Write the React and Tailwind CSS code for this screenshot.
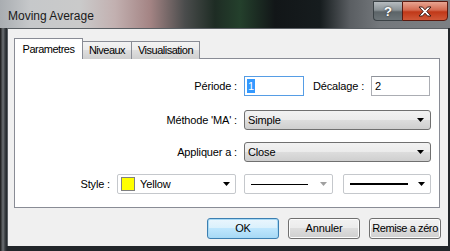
import React from "react";

const font = { fontFamily: '"Liberation Sans", Arial, sans-serif' };

function Arrow({ gray }) {
  return (
    <svg width="7" height="4" viewBox="0 0 7 4" className="shrink-0">
      <path d="M0 0H7L3.5 4Z" fill={gray ? "#a0a0a0" : "#000"} />
    </svg>
  );
}

function DropList({ text }) {
  return (
    <div className="h-[20px] w-[187px] rounded-[3px] border border-[#707070] bg-[linear-gradient(180deg,#f2f2f2_0%,#ebebeb_50%,#dddddd_50%,#cfcfcf_100%)] flex items-center pl-[3px] pr-[6px]">
      <span className="flex-1 text-[11px] text-black leading-none">{text}</span>
      <Arrow />
    </div>
  );
}

function Combo({ w, children, gray }) {
  return (
    <div
      className="h-[20px] rounded-[2px] border border-[#c5c8cc] bg-white flex items-center pr-[5px]"
      style={{ width: w }}
    >
      <div className="flex-1 flex items-center h-full">{children}</div>
      <Arrow gray={gray} />
    </div>
  );
}

function Btn({ children, focus }) {
  return (
    <div
      className={
        "w-[72px] h-[21px] rounded-[3px] flex items-center justify-center text-[11px] text-black leading-none whitespace-nowrap " +
        (focus
          ? "border border-[#3c7fb1] bg-[linear-gradient(180deg,#eaf6fd_0%,#d9f0fc_50%,#bee6fd_50%,#a7d9f5_100%)] shadow-[inset_0_0_0_1px_#a7d9f5]"
          : "border border-[#707070] bg-[linear-gradient(180deg,#f2f2f2_0%,#ebebeb_50%,#dddddd_50%,#cfcfcf_100%)] shadow-[inset_0_0_0_1px_#fcfcfc]")
      }
    >
      {children}
    </div>
  );
}

export default function App() {
  return (
    <div className="w-[450px] h-[251px] overflow-hidden flex flex-col bg-[#111619] tracking-[-0.15px]" style={font}>
      {/* title bar */}
      <div className="h-[28px] shrink-0 flex items-start bg-[linear-gradient(90deg,#a9adb1_0px,#c6c8ca_30px,#cacaca_80px,#c2b0b0_115px,#a48484_150px,#4a4c4c_185px,#1e2c24_215px,#24402c_240px,#121618_275px,#161c1e_320px,#5a5e62_350px,#74787c_380px,#7c8084_450px)]">
        <div className="pl-[8px] pt-[10px] text-[12px] leading-[12px] text-[#1a1a1a] tracking-normal">Moving Average</div>
        <div className="ml-auto mr-[2px] flex mt-[1px]">
          <div className="w-[29px] h-[20px] rounded-bl-[4px] border border-[#3b4246] border-r-0 bg-[linear-gradient(180deg,#b6bcc0_0%,#8a9296_45%,#5c6468_55%,#6c7478_100%)] flex items-center justify-center">
            <span className="text-[13px] font-bold text-white leading-none [text-shadow:0_0_2px_#222]">?</span>
          </div>
          <div className="w-[46px] h-[20px] rounded-br-[4px] border border-[#5a1a10] bg-[linear-gradient(180deg,#e8a592_0%,#d46a50_45%,#c03818_55%,#d05838_100%)] flex items-center justify-center">
            <svg width="14" height="11" viewBox="0 0 14 11">
              <path
                d="M1 1H4.5L7 3.8L9.5 1H13L8.8 5.5L13 10H9.5L7 7.2L4.5 10H1L5.2 5.5Z"
                fill="#fff"
                stroke="#3a1a14"
                strokeWidth="1"
                strokeLinejoin="round"
              />
            </svg>
          </div>
        </div>
      </div>

      {/* body */}
      <div className="flex-1 flex bg-[linear-gradient(90deg,#161616_0px,#6e7276_3px,#3a3e42_5px,#22262a_7px)]">
        <div className="ml-[7px] mr-[2px] h-[218px] w-[441px] bg-[#f0f0f0] border-l border-t border-[#5a5f64] flex flex-col pl-[6px] pt-[9px]">
          {/* tabs */}
          <div className="flex items-end h-[21px] relative z-10 tracking-[-0.5px]">
            <div className="w-[69px] h-[21px] border border-b-0 border-[#898c95] bg-white flex items-center justify-center text-[11px] text-black leading-none">
              Parametres
            </div>
            <div className="w-[49px] h-[18px] border border-l-0 border-b-0 border-[#898c95] bg-[linear-gradient(180deg,#f3f3f3_0%,#ebebeb_50%,#dedede_50%,#cfcfcf_100%)] flex items-center justify-center text-[11px] text-black leading-none">
              Niveaux
            </div>
            <div className="w-[68px] h-[18px] border border-l-0 border-b-0 border-[#898c95] bg-[linear-gradient(180deg,#f3f3f3_0%,#ebebeb_50%,#dedede_50%,#cfcfcf_100%)] flex items-center justify-center text-[11px] text-black leading-none">
              Visualisation
            </div>
          </div>
          {/* panel */}
          <div className="-mt-[1px] w-[426px] h-[150px] border border-[#898c95] bg-white flex flex-col pt-[17px] text-[11px] text-black leading-none">
            <div className="flex items-center h-[20px]">
              <div className="w-[222px] text-right">Période :</div>
              <div className="ml-[7px] w-[60px] h-[20px] border border-[#569de5] bg-white flex items-center pl-[2px]">
                <span className="bg-[#3399ff] text-white px-[1px] h-[14px] flex items-center">1</span>
              </div>
              <div className="ml-[9px]">Décalage :</div>
              <div className="ml-[7px] w-[59px] h-[20px] border border-[#abadb3] border-t-[#8e9299] bg-white flex items-center pl-[3px]">
                2
              </div>
            </div>
            <div className="flex items-center h-[20px] mt-[14px]">
              <div className="w-[222px] text-right">Méthode 'MA' :</div>
              <div className="ml-[7px]">
                <DropList text="Simple" />
              </div>
            </div>
            <div className="flex items-center h-[20px] mt-[12px]">
              <div className="w-[222px] text-right">Appliquer a :</div>
              <div className="ml-[7px]">
                <DropList text="Close" />
              </div>
            </div>
            <div className="flex items-center h-[20px] mt-[12px]">
              <div className="w-[95px] text-right">Style :</div>
              <div className="ml-[7px]">
                <Combo w={119}>
                  <div className="ml-[3px] w-[14px] h-[14px] border border-[#808080] bg-[#ffff00]" />
                  <span className="ml-[5px]">Yellow</span>
                </Combo>
              </div>
              <div className="ml-[8px]">
                <Combo w={89} gray>
                  <div className="ml-[6px] w-[57px] h-[1px] bg-black" />
                </Combo>
              </div>
              <div className="ml-[10px]">
                <Combo w={88}>
                  <div className="ml-[6px] w-[58px] h-[2px] bg-black" />
                </Combo>
              </div>
            </div>
          </div>
          {/* buttons */}
          <div className="flex justify-end gap-[9px] mt-[10px] pr-[7px]">
            <Btn focus>OK</Btn>
            <Btn>Annuler</Btn>
            <Btn>
              <span className="tracking-[-0.4px]">Remise a zéro</span>
            </Btn>
          </div>
        </div>
      </div>
    </div>
  );
}
